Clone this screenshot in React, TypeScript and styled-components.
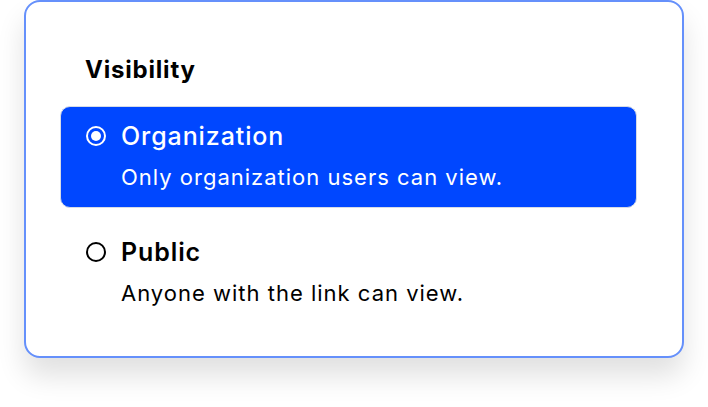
import React, { useState } from 'react'
import styled, { createGlobalStyle } from 'styled-components'

const GlobalStyle = createGlobalStyle`
  html, body {
    margin: 0;
    padding: 0;
    background: #ffffff;
  }
  body {
    font-family: Inter, "Noto Sans", sans-serif;
    -webkit-font-smoothing: antialiased;
  }
`

const Page = styled.div`
  width: 708px;
  height: 407px;
  padding: 0 24px;
  box-sizing: border-box;
`

const Card = styled.div`
  box-sizing: border-box;
  width: 660px;
  height: 358px;
  border: 2px solid #6590fb;
  border-radius: 16px;
  background: #ffffff;
  box-shadow: 0 18px 28px rgba(0, 0, 0, 0.12);
  padding: 53px 45px 0 34px;
`

const Heading = styled.h2`
  margin: 0 0 21px 25px;
  font-size: 24px;
  line-height: 30px;
  font-weight: 700;
  letter-spacing: 0.8px;
  color: #000000;
`

const OptionList = styled.div`
  display: flex;
  flex-direction: column;
  gap: 14px;
`

const Option = styled.label<{ $selected: boolean }>`
  display: grid;
  grid-template-columns: 20px 1fr;
  column-gap: 15px;
  row-gap: 11px;
  align-items: center;
  padding: 13px 24px 16px 25px;
  border-radius: 10px;
  border: 1px solid ${(p) => (p.$selected ? '#d6dbe6' : 'transparent')};
  background: ${(p) => (p.$selected ? '#0047ff' : 'transparent')};
  color: ${(p) => (p.$selected ? '#ffffff' : '#000000')};
  cursor: pointer;
`

const Radio = styled.span<{ $selected: boolean }>`
  box-sizing: border-box;
  width: 20px;
  height: 20px;
  border-radius: 50%;
  border: 2px solid currentColor;
  display: flex;
  align-items: center;
  justify-content: center;
  &::after {
    content: '';
    display: ${(p) => (p.$selected ? 'block' : 'none')};
    width: 10px;
    height: 10px;
    border-radius: 50%;
    background: currentColor;
  }
`

const Title = styled.span<{ $selected: boolean }>`
  font-size: 25px;
  line-height: 32px;
  letter-spacing: 0.9px;
  font-weight: ${(p) => (p.$selected ? 500 : 600)};
`

const Description = styled.span`
  grid-column: 2;
  font-size: 22px;
  line-height: 28px;
  letter-spacing: 1px;
  font-weight: 400;
`

const options = [
  { id: 'org', title: 'Organization', description: 'Only organization users can view.' },
  { id: 'public', title: 'Public', description: 'Anyone with the link can view.' },
]

export default function App() {
  const [visibility, setVisibility] = useState('org')

  return (
    <>
      <GlobalStyle />
      <Page>
        <Card>
          <Heading>Visibility</Heading>
          <OptionList>
            {options.map((o) => {
              const selected = o.id === visibility
              return (
                <Option key={o.id} $selected={selected} onClick={() => setVisibility(o.id)}>
                  <Radio $selected={selected} />
                  <Title $selected={selected}>{o.title}</Title>
                  <Description>{o.description}</Description>
                </Option>
              )
            })}
          </OptionList>
        </Card>
      </Page>
    </>
  )
}
